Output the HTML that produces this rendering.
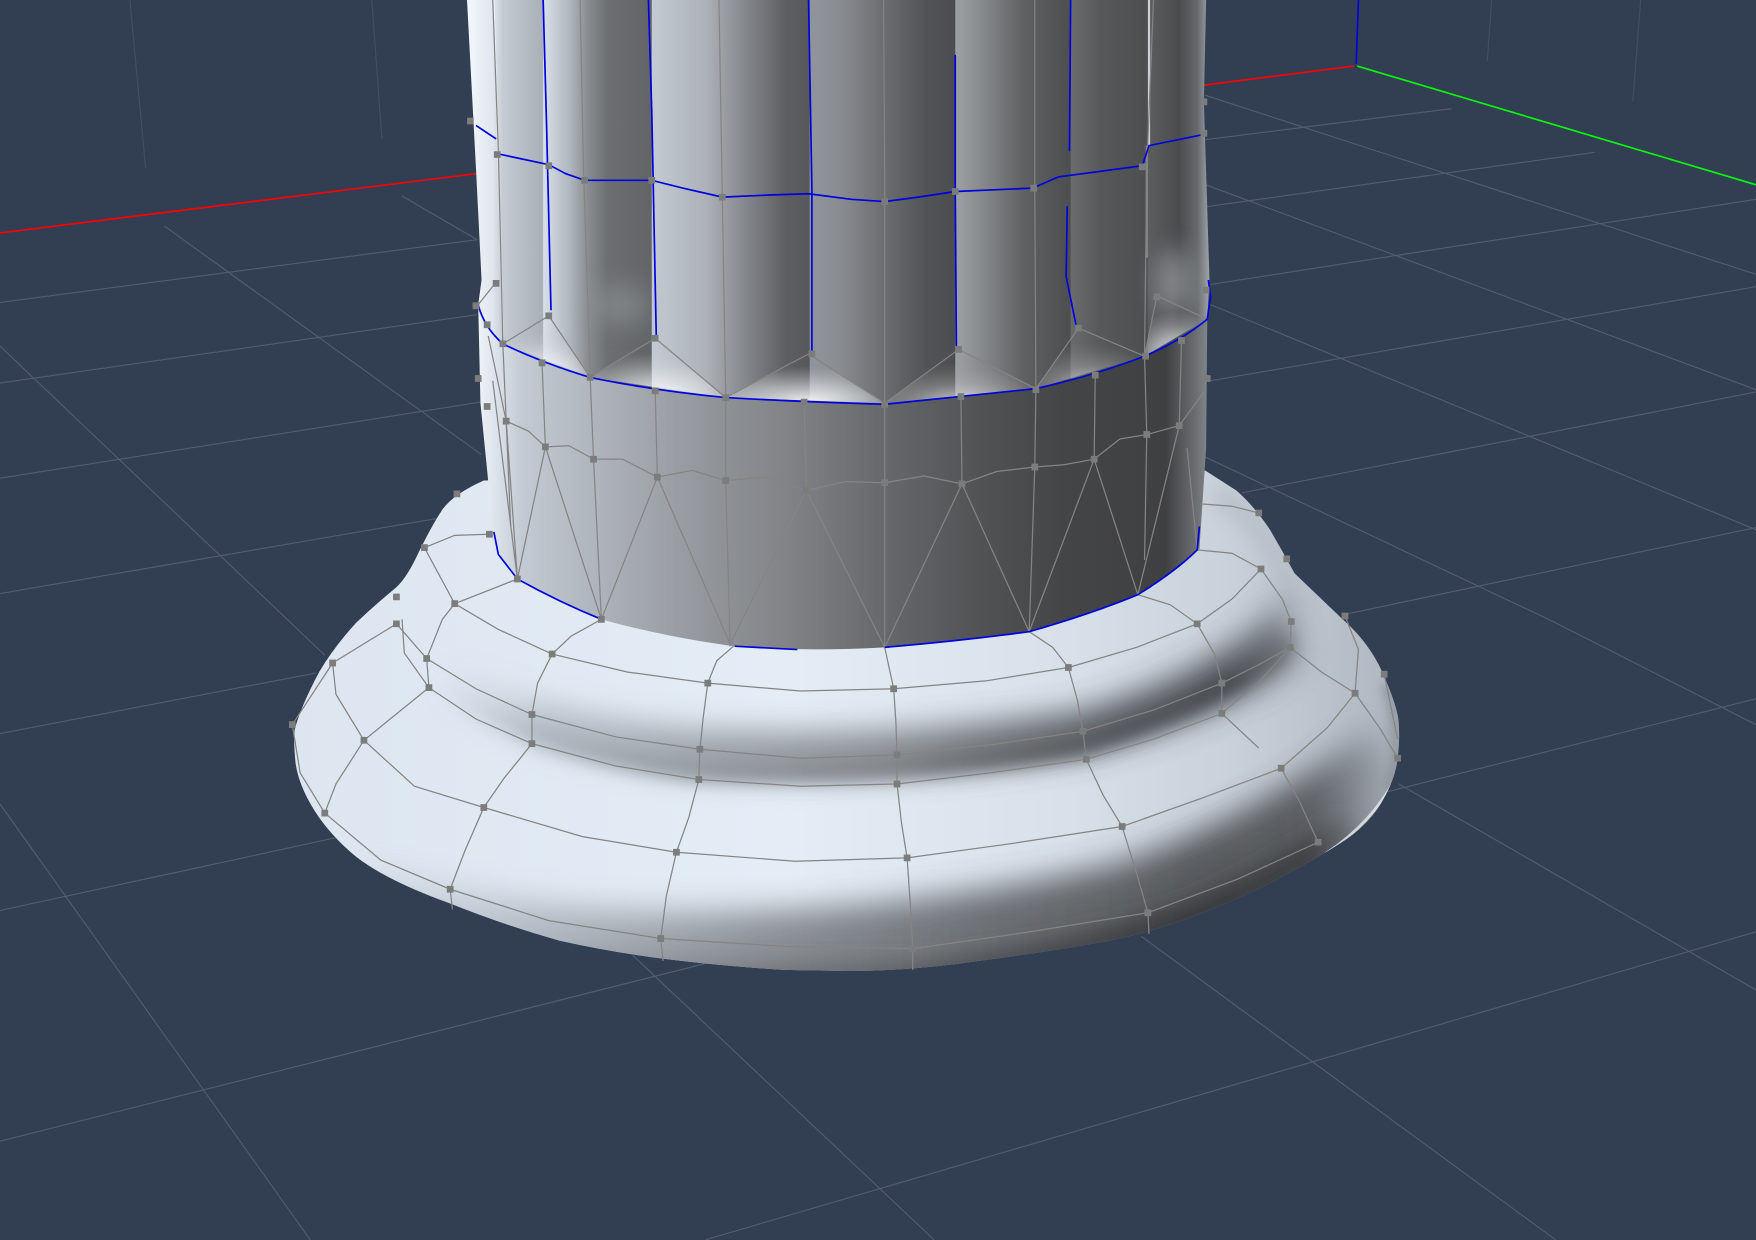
<!DOCTYPE html>
<html><head><meta charset="utf-8"><title>Column base</title>
<style>html,body{margin:0;padding:0;background:#323e52}svg{display:block;width:1756px;height:1240px}</style>
</head><body>
<svg xmlns="http://www.w3.org/2000/svg" viewBox="0 0 1568 1107.2" preserveAspectRatio="none">
<defs>
<filter id="b4" filterUnits="userSpaceOnUse" x="200" y="380" width="1150" height="560"><feGaussianBlur stdDeviation="4"/></filter>
<filter id="b8" filterUnits="userSpaceOnUse" x="200" y="380" width="1150" height="560"><feGaussianBlur stdDeviation="8"/></filter>
<filter id="b14" filterUnits="userSpaceOnUse" x="200" y="380" width="1150" height="560"><feGaussianBlur stdDeviation="14"/></filter>
<filter id="s9" filterUnits="userSpaceOnUse" x="400" y="150" width="720" height="250"><feGaussianBlur stdDeviation="11"/></filter>
<clipPath id="baseClip"><path d="M432 429Q405 441 395 455Q385 470 372 497Q362 518 352 526Q335 540 318 556Q298 578 285 600Q268 632 263 652Q262 663 264 682Q267 702 281 724Q295 746 318 765Q345 786 400 806Q450 826 500 840Q550 851 600 857Q650 863 700 866L757 867Q814 867 874 858Q934 850 979 842Q1024 834 1066 818Q1109 802 1146 782Q1184 762 1204 748Q1224 734 1235 714Q1246 695 1248 677Q1250 660 1249 647Q1249 634 1236 604Q1224 575 1199 553L1156 512Q1145 492 1134 473Q1120 452 1104 438L1076 420Z"/></clipPath>
<clipPath id="upClip"><path d="M417 0L425 150L430 250L427 272Q432 292 449 307Q484 324 527 337Q585 349 648 355Q718 359 790 361Q858 354 925 347Q978 335 1022 318Q1055 304 1078 285L1080 250L1075 90L1077 0Z"/></clipPath>
<linearGradient id="baseG" gradientUnits="userSpaceOnUse" x1="260" x2="1250" y1="0" y2="0">
<stop offset="0" stop-color="#dde6f0"/><stop offset=".45" stop-color="#e4edf6"/><stop offset=".7" stop-color="#d8e0ea"/><stop offset=".85" stop-color="#c8d0da"/><stop offset="1" stop-color="#aeb6c0"/></linearGradient>
<linearGradient id="groove" gradientUnits="userSpaceOnUse" x1="390" x2="1160" y1="0" y2="0">
<stop offset="0" stop-color="#c5ced8" stop-opacity=".1"/><stop offset=".12" stop-color="#a5adb6" stop-opacity=".9"/><stop offset=".32" stop-color="#8b9096"/><stop offset=".52" stop-color="#73767a"/><stop offset=".64" stop-color="#55585b"/><stop offset=".78" stop-color="#3b3e42"/><stop offset=".92" stop-color="#3a3d42"/><stop offset="1" stop-color="#767b82"/></linearGradient>
<linearGradient id="bot" gradientUnits="userSpaceOnUse" x1="290" x2="1240" y1="0" y2="0">
<stop offset="0" stop-color="#b4bcc6" stop-opacity=".2"/><stop offset=".2" stop-color="#a6adb6"/><stop offset=".42" stop-color="#74787d"/><stop offset=".62" stop-color="#505357"/><stop offset=".82" stop-color="#3a3c3e"/><stop offset=".93" stop-color="#404346"/><stop offset="1" stop-color="#a0a6ae"/></linearGradient>
<linearGradient id="band" gradientUnits="userSpaceOnUse" x1="427" x2="1080" y1="0" y2="0">
<stop offset="0" stop-color="#eef3f9"/><stop offset=".06" stop-color="#c3cad3"/><stop offset=".2" stop-color="#a7acb3"/><stop offset=".33" stop-color="#8f9398"/><stop offset=".46" stop-color="#7a7c7f"/><stop offset=".56" stop-color="#65676a"/><stop offset=".69" stop-color="#505254"/><stop offset=".8" stop-color="#444547"/><stop offset=".94" stop-color="#3f4042"/><stop offset=".98" stop-color="#6a6d70"/><stop offset="1" stop-color="#85898d"/></linearGradient>
<linearGradient id="f0" gradientUnits="userSpaceOnUse" x1="420" x2="486" y1="0" y2="0"><stop offset="0" stop-color="#f0f5fa"/><stop offset=".3" stop-color="#e0e6ed"/><stop offset=".45" stop-color="#c4cad2"/><stop offset="1" stop-color="#a9afb6"/></linearGradient>
<linearGradient id="f1" gradientUnits="userSpaceOnUse" x1="485" x2="581" y1="0" y2="0"><stop offset="0" stop-color="#d8e0e9"/><stop offset=".25" stop-color="#b0b6bd"/><stop offset=".42" stop-color="#888c90"/><stop offset=".6" stop-color="#6c6f72"/><stop offset="1" stop-color="#626568"/></linearGradient>
<linearGradient id="f2" gradientUnits="userSpaceOnUse" x1="580" x2="723" y1="0" y2="0"><stop offset="0" stop-color="#c4cbd4"/><stop offset=".35" stop-color="#adb2b8"/><stop offset=".6" stop-color="#84878c"/><stop offset=".85" stop-color="#5d5f63"/><stop offset="1" stop-color="#56585b"/></linearGradient>
<linearGradient id="f3" gradientUnits="userSpaceOnUse" x1="722" x2="854" y1="0" y2="0"><stop offset="0" stop-color="#8f959c"/><stop offset=".2" stop-color="#8a8e93"/><stop offset=".5" stop-color="#6c6e71"/><stop offset=".8" stop-color="#515356"/><stop offset="1" stop-color="#4b4d4f"/></linearGradient>
<linearGradient id="f4" gradientUnits="userSpaceOnUse" x1="853" x2="956" y1="0" y2="0"><stop offset="0" stop-color="#9da1a5"/><stop offset=".3" stop-color="#7f8285"/><stop offset=".6" stop-color="#5e6062"/><stop offset="1" stop-color="#4c4e50"/></linearGradient>
<linearGradient id="f5" gradientUnits="userSpaceOnUse" x1="955" x2="1026" y1="0" y2="0"><stop offset="0" stop-color="#6a6c6e"/><stop offset=".4" stop-color="#56585a"/><stop offset="1" stop-color="#4b4d4f"/></linearGradient>
<linearGradient id="f6" gradientUnits="userSpaceOnUse" x1="1026" x2="1080" y1="0" y2="0"><stop offset="0" stop-color="#5a5c5e"/><stop offset=".5" stop-color="#4a4c4e"/><stop offset=".8" stop-color="#666a6e"/><stop offset="1" stop-color="#a0a5aa"/></linearGradient>
<radialGradient id="pk" cx=".5" cy="1" r=".75"><stop offset="0" stop-color="#fff" stop-opacity=".95"/><stop offset=".5" stop-color="#e8ecf0" stop-opacity=".5"/><stop offset="1" stop-color="#ccc" stop-opacity="0"/></radialGradient>
<radialGradient id="pk2" cx=".5" cy="1" r=".75"><stop offset="0" stop-color="#e8eaec" stop-opacity=".85"/><stop offset=".5" stop-color="#bbb" stop-opacity=".35"/><stop offset="1" stop-color="#999" stop-opacity="0"/></radialGradient>
</defs>

<rect width="1568" height="1107.2" fill="#323e52"/>

<g stroke="#434f62" stroke-width="1" fill="none">
<path d="M116 0L130 150M332 0L341 124M1332 0L1328 55M1465 0L1458 91"/>
</g>
<g stroke="#525d6f" stroke-width="1" fill="none">
<path d="M0 270L426 214M0 342L426 281M0 427L429 359M0 530L390 463M0 655L282 601M0 813L300 748M0 1019L1568 624M630 1107L1568 832"/>
<path d="M1074 125L1296 97M1074 185L1424 136M1081 254L1568 178M1081 340L1568 256M1109 440L1568 350M1199 549L1568 471"/>
<path d="M359 175L426 214M147 202L430 406M0 309L290 585M0 718L277 1107M565 853L834 1107M1019 836L1389 1107M1249 700L1568 884"/>
<path d="M1076 408L1384 553.6L1568 647M1081 272L1568 473M1074 164L1568 348M1076 85L1568 245"/>
</g>
<g fill="none" stroke-width="1.5">
<path d="M0 208L426 155M1075 76L1209 59" stroke="#f00"/>
<path d="M1212 59L1568 165" stroke="#0f0"/>
<path d="M1213 0L1211 57" stroke="#0000e0"/>
</g>

<!-- base -->
<g clip-path="url(#baseClip)">
<rect x="250" y="420" width="1010" height="460" fill="url(#baseG)"/>
<path d="M1085 440Q1150 480 1152 545" stroke="#aeb6c0" stroke-width="20" fill="none" filter="url(#b8)" opacity=".55"/>
<path d="M410 600Q480 640 625 652Q800 662 967 635Q1090 600 1148 535L1160 590Q1090 640 967 672Q800 698 625 690Q480 675 395 615Z" fill="url(#groove)" filter="url(#b14)" opacity=".85"/>
<path d="M400 612Q480 660 625 678Q800 688 967 660Q1085 625 1150 565L1152 585Q1090 632 967 672Q800 702 625 695Q480 680 395 620Z" fill="url(#groove)" filter="url(#b8)"/>
<path d="M330 775Q450 812 600 815Q815 815 1002 770Q1130 725 1225 650L1300 800L1000 920L500 900L300 800Z" fill="url(#bot)" filter="url(#b14)" opacity=".8"/>
<path d="M450 838Q650 866 815 858Q950 843 1060 805Q1140 770 1195 730L1230 760L1000 880L600 885Z" fill="url(#bot)" filter="url(#b8)"/>
<path d="M1184 762Q1225 735 1246 695" stroke="#e6ecf2" stroke-width="2.5" fill="none" opacity=".8"/>
<path d="M1238 610Q1256 660 1240 705" stroke="#858b92" stroke-width="12" fill="none" filter="url(#b4)" opacity=".6"/>
</g>

<path d="M427 272Q432 292 449 307Q484 324 527 337Q585 349 648 355Q718 359 790 361Q858 354 925 347Q978 335 1022 318Q1055 304 1078 285L1077 400L1071 490Q1050 510 1016 531Q975 548 919 564Q860 572 790 578Q720 582 655 577Q590 568 537 553Q500 538 462 517Q445 495 441 490L436 430L429 360Z" fill="url(#band)"/>

<g clip-path="url(#upClip)">
<rect x="410" y="0" width="76" height="380" fill="url(#f0)"/>
<rect x="485" y="0" width="98" height="380" fill="url(#f1)"/>
<rect x="582" y="0" width="142" height="380" fill="url(#f2)"/>
<rect x="723" y="0" width="131" height="380" fill="url(#f3)"/>
<rect x="853" y="0" width="104" height="380" fill="url(#f4)"/>
<rect x="956" y="0" width="70" height="380" fill="url(#f5)"/>
<rect x="1025" y="0" width="60" height="380" fill="url(#f6)"/>
<rect x="1025" y="0" width="2" height="130" fill="#dfe3e7" opacity=".85"/>
<rect x="1023" y="130" width="2" height="100" fill="#c0c4c8" opacity=".5"/>
<path d="M441 0L449 300" stroke="#fff" stroke-width="1.4" fill="none" opacity=".5"/>
<ellipse cx="555" cy="272" rx="26" ry="18" fill="#a4a8ac" filter="url(#s9)" opacity=".4"/>
<ellipse cx="1048" cy="252" rx="14" ry="30" fill="#c8ccd0" filter="url(#s9)" opacity=".5"/>
<path d="M449 307L490 282L527 337Z" fill="url(#pk)"/>
<path d="M527 337L585 302L648 355Z" fill="url(#pk)"/>
<path d="M648 355L722 316L790 360Z" fill="url(#pk)"/>
<path d="M790 360L856 312L925 347Z" fill="url(#pk2)"/>
<path d="M925 347L963 293L1022 318Z" fill="url(#pk2)"/>
<path d="M1022 318L1033 264L1078 285Z" fill="url(#pk)"/>
</g>

<g fill="none" stroke="#848484" stroke-width="1.1">
<path d="M440 0L445 135L449 307L452 376L456 470M518 0L521 150L527 337L530 410L537 553M642 0L645 176L648 355L648 429L652 577M789 0L790 180L790 361L790 578M924 0L924 170L925 347L924 417L919 564M1030 0L1024 150L1022 318L1024 388L1022 500"/>
<path d="M449 307L490 282L527 337L585 302L648 355L722 316L790 360L856 312L925 347L963 293L1022 318L1033 264L1078 285"/>
<path d="M427 272L443 252" />
<path d="M436 300L452 376L472 385L487 399L508 398L530 410L556 410L587 426L618 420L648 429L684 426L720 438L755 430L790 431L825 425L859 432L890 421L924 417L950 415L977 410L1000 392L1024 388L1053 380L1075 350"/>
<path d="M484 324L487 399L462 517M487 399L537 553M587 426L537 553M587 426L652 575M720 438L652 575M720 438L790 578M859 432L790 578M859 432L919 564M977 410L919 564M977 410L1016 531M1053 380L1016 531M585 349L587 426M718 359L720 438M858 354L859 432M978 335L977 410M1055 304L1053 380M452 376L462 517M1060 400L1069 491M440 340L462 517"/>
<path d="M379 489L406 478L436 477M1074 450L1100 452L1124 458"/>
<path d="M379 489L406 539L445 562L493 584L560 600L632 610L715 617L798 615L880 608L954 596L1015 578L1069 557L1100 535L1126 508"/>
<path d="M354 557L381 588L425 615L475 638L550 658L625 669L715 677L801 674L885 665L967 653L1030 634L1091 610L1125 593L1152 578"/>
<path d="M383 614L425 642L475 664L550 684L624 696L715 702L801 700L885 690L970 678L1030 660L1091 637L1125 608L1152 578"/>
<path d="M325 661L370 702L432 721L520 747L604 761L710 769L810 766L905 753L1002 738L1075 712L1144 686L1185 650L1210 619"/>
<path d="M290 726L340 768L402 794L490 822L590 838L700 845L815 847L920 832L1025 815L1105 785L1177 752"/>
<path d="M462 517L406 539L395 553L381 588L383 614L325 661L300 700L290 726"/>
<path d="M537 553L510 568L493 584L480 610L475 638L475 664L450 695L432 721L415 760L402 794L404 812"/>
<path d="M655 577L640 590L632 610L628 640L625 669L624 696L615 730L604 761L595 800L590 838L592 858"/>
<path d="M790 578L798 615L800 645L801 674L801 700L805 735L810 766L813 810L815 847L815 866"/>
<path d="M919 564L940 578L954 596L962 625L967 653L970 678L985 710L1002 738L1015 780L1025 815L1026 834"/>
<path d="M1016 531L1045 540L1069 557L1085 585L1091 610L1091 637L1124 668M1144 686L1160 715L1177 752"/>
<path d="M1069 491L1100 494L1126 508L1145 535L1153 555L1152 578L1180 600L1210 619L1232 650L1248 677"/>
<path d="M359 553L361 583L383 614M297 592L354 557M297 592L300 620L325 661M290 726L268 690L261 647L297 592M1201 550L1213 580L1210 619M1236 602L1248 660"/>
</g>

<g fill="none" stroke="#0000e0" stroke-width="1.5">
<path d="M427 272Q432 292 449 307Q484 324 527 337Q585 349 648 355Q718 359 790 361Q858 354 925 347Q978 335 1022 318Q1055 304 1078 285L1081 265L1079 250"/>
<path d="M425 112L443 124M443 137L490 147L505 155L522 161L582 161L610 168L645 176L690 174L722 173L760 178L790 180L820 176L853 171L922 168L945 158L1020 148L1026 130L1075 120"/>
<path d="M485 0L488 110L492 277M579 0L582 100L586 300M722 0L725 170L725 314M853 49L853 170L854 311M956 0L955 135M953 184L952 247L961 291"/>
<path d="M441 475L445 495L462 517Q500 538 537 553M656 577L712 580M790 578Q860 572 919 564Q975 548 1016 531Q1050 510 1069 491L1071 470"/>
</g>

<path fill="#7c7c7c" d="M417 105h6v6h-6zM441 135h6v6h-6zM487 145h6v6h-6zM519 158h6v6h-6zM579 158h6v6h-6zM642 173h6v6h-6zM787 177h6v6h-6zM850 168h6v6h-6zM920 165h6v6h-6zM1017 146h6v6h-6zM1072 116h6v6h-6zM1072 88h6v6h-6zM440 250h6v6h-6zM422 270h6v6h-6zM432 287h6v6h-6zM446 304h6v6h-6zM487 279h6v6h-6zM481 321h6v6h-6zM524 334h6v6h-6zM582 299h6v6h-6zM582 346h6v6h-6zM645 352h6v6h-6zM722 313h6v6h-6zM715 356h6v6h-6zM787 358h6v6h-6zM853 309h6v6h-6zM855 351h6v6h-6zM922 345h6v6h-6zM960 290h6v6h-6zM975 332h6v6h-6zM1020 315h6v6h-6zM1030 262h6v6h-6zM1052 301h6v6h-6zM1074 256h6v6h-6zM1075 335h6v6h-6zM424 335h6v6h-6zM432 360h6v6h-6zM449 373h6v6h-6zM484 396h6v6h-6zM527 407h6v6h-6zM584 423h6v6h-6zM645 426h6v6h-6zM717 435h6v6h-6zM787 428h6v6h-6zM856 429h6v6h-6zM921 414h6v6h-6zM974 407h6v6h-6zM1021 385h6v6h-6zM1050 377h6v6h-6zM405 438h6v6h-6zM434 474h6v6h-6zM376 486h6v6h-6zM459 514h6v6h-6zM403 536h6v6h-6zM351 530h6v6h-6zM351 554h6v6h-6zM534 550h6v6h-6zM490 581h6v6h-6zM378 585h6v6h-6zM294 589h6v6h-6zM380 611h6v6h-6zM629 607h6v6h-6zM472 635h6v6h-6zM472 661h6v6h-6zM258 644h6v6h-6zM322 658h6v6h-6zM622 666h6v6h-6zM621 693h6v6h-6zM795 612h6v6h-6zM798 671h6v6h-6zM798 697h6v6h-6zM429 718h6v6h-6zM287 723h6v6h-6zM601 758h6v6h-6zM807 763h6v6h-6zM399 791h6v6h-6zM587 835h6v6h-6zM812 844h6v6h-6zM951 593h6v6h-6zM964 650h6v6h-6zM967 675h6v6h-6zM999 735h6v6h-6zM1022 812h6v6h-6zM1066 554h6v6h-6zM1088 607h6v6h-6zM1088 634h6v6h-6zM1141 683h6v6h-6zM1174 749h6v6h-6zM1149 575h6v6h-6zM1150 552h6v6h-6zM1207 616h6v6h-6zM1233 599h6v6h-6zM1245 674h6v6h-6zM1121 455h6v6h-6zM1123 505h6v6h-6zM1146 496h6v6h-6zM1198 547h6v6h-6z"/>
</svg>
</body></html>
